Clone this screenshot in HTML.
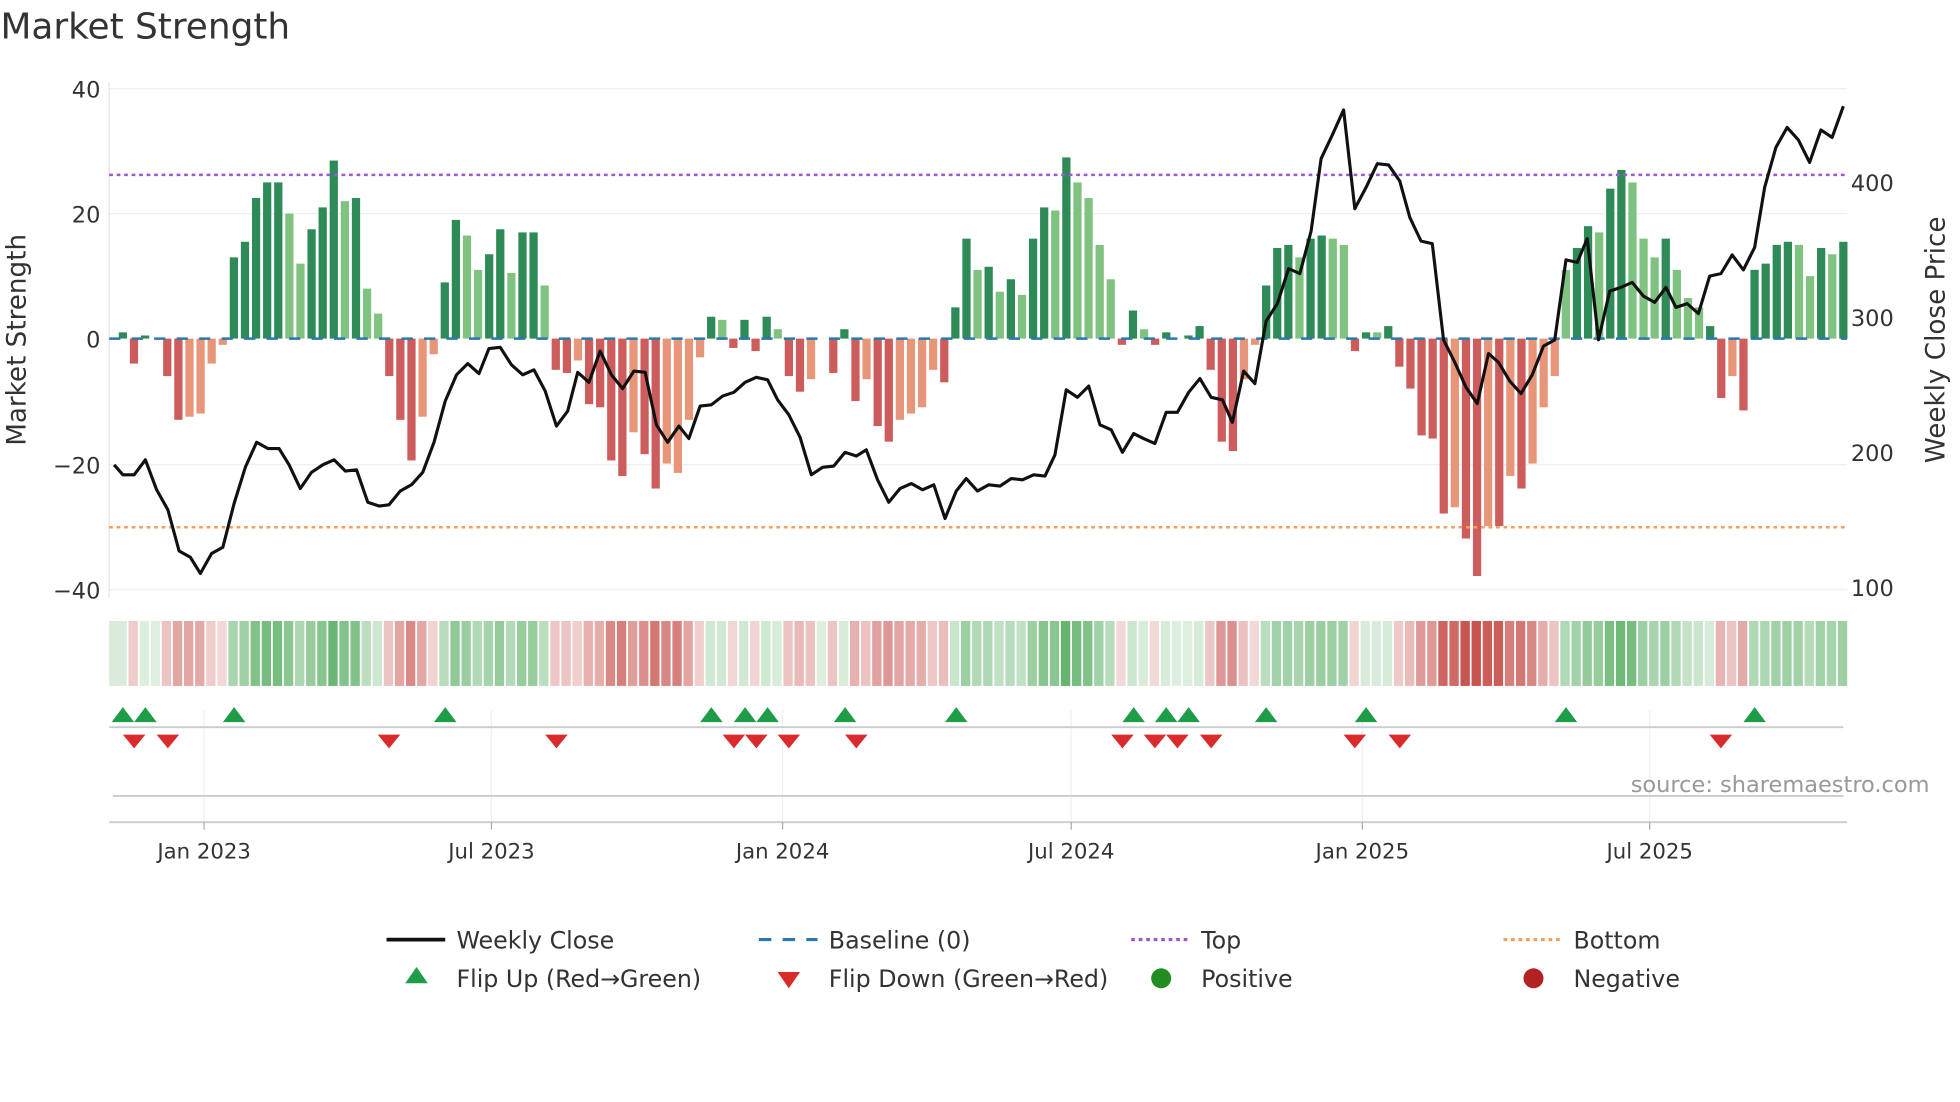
<!DOCTYPE html>
<html><head><meta charset="utf-8"><style>
html,body{margin:0;padding:0;background:#fff;width:1960px;height:1102px;overflow:hidden}
svg{display:block}
text{font-family:"DejaVu Sans","Liberation Sans",sans-serif;fill:#333}
</style></head><body>
<svg id="s" width="1960" height="1102" viewBox="0 0 1568 882" xmlns="http://www.w3.org/2000/svg">
<rect width="1568" height="882" fill="#fff"/>
<text x="0" y="31" font-size="28.7">Market Strength</text>
<g stroke="#eceff2" stroke-width="1">
<line x1="87" y1="71" x2="1478" y2="71"/><line x1="87" y1="171" x2="1478" y2="171"/>
<line x1="87" y1="372" x2="1478" y2="372"/><line x1="87" y1="472" x2="1478" y2="472"/>
</g>
<line x1="87" y1="66" x2="87" y2="478" stroke="#e6e6e6"/>
<g font-size="18" text-anchor="end">
<text x="80" y="78">40</text><text x="80" y="178">20</text><text x="80" y="278">0</text>
<text x="80" y="379">−20</text><text x="80" y="479">−40</text>
</g>
<g font-size="18">
<text x="1481" y="153">400</text><text x="1481" y="261">300</text>
<text x="1481" y="369">200</text><text x="1481" y="477">100</text>
</g>
<text transform="translate(20,272) rotate(-90)" font-size="21" text-anchor="middle">Market Strength</text>
<text transform="translate(1556,272) rotate(-90)" font-size="21" text-anchor="middle">Weekly Close Price</text>
<g id="bars"></g>
<line x1="87" y1="140" x2="1478" y2="140" stroke="#9b59d6" stroke-width="2" stroke-dasharray="3,3"/>
<line x1="87" y1="422" x2="1478" y2="422" stroke="#f0a060" stroke-width="2" stroke-dasharray="3,3"/>
<line x1="87" y1="271" x2="1478" y2="271" stroke="#2b77b0" stroke-width="2" stroke-dasharray="9,9"/>
<polyline id="price" fill="none" stroke="#111" stroke-width="2.5" stroke-linejoin="round"/>
<g id="heat"></g>
<g stroke="#eef0f2"><line x1="163" y1="568" x2="163" y2="658"/><line x1="393" y1="568" x2="393" y2="658"/><line x1="626" y1="568" x2="626" y2="658"/><line x1="857" y1="568" x2="857" y2="658"/><line x1="1090" y1="568" x2="1090" y2="658"/><line x1="1320" y1="568" x2="1320" y2="658"/></g>
<line x1="87" y1="582" x2="1475" y2="582" stroke="#ccc" stroke-width="1.5"/>
<line x1="90" y1="637" x2="1475" y2="637" stroke="#ccc" stroke-width="1.5"/>
<line x1="87" y1="658" x2="1478" y2="658" stroke="#ccc" stroke-width="1.5"/>
<g stroke="#aaa"><line x1="163" y1="658" x2="163" y2="664"/><line x1="393" y1="658" x2="393" y2="664"/><line x1="626" y1="658" x2="626" y2="664"/><line x1="857" y1="658" x2="857" y2="664"/><line x1="1090" y1="658" x2="1090" y2="664"/><line x1="1320" y1="658" x2="1320" y2="664"/></g>
<g id="flips"></g>
<text x="1544" y="634" font-size="18" text-anchor="end" style="fill:#999">source: sharemaestro.com</text>
<g font-size="17" text-anchor="middle">
<text x="163" y="687">Jan 2023</text><text x="393" y="687">Jul 2023</text><text x="626" y="687">Jan 2024</text>
<text x="857" y="687">Jul 2024</text><text x="1090" y="687">Jan 2025</text><text x="1320" y="687">Jul 2025</text>
</g>
<g font-size="19">
<line x1="309" y1="752" x2="356" y2="752" stroke="#111" stroke-width="3"/><text x="365" y="759">Weekly Close</text>
<line x1="607" y1="752" x2="654" y2="752" stroke="#2b77b0" stroke-width="2.5" stroke-dasharray="10,9"/><text x="663" y="759">Baseline (0)</text>
<line x1="905" y1="752" x2="952" y2="752" stroke="#9b59d6" stroke-width="2.5" stroke-dasharray="3,3"/><text x="961" y="759">Top</text>
<line x1="1203" y1="752" x2="1250" y2="752" stroke="#f0a060" stroke-width="2.5" stroke-dasharray="3,3"/><text x="1259" y="759">Bottom</text>
<polygon points="333,774 342,787 324,787" fill="#1e9c48"/><text x="365" y="790">Flip Up (Red→Green)</text>
<polygon points="622,778 640,778 631,791" fill="#d92b2b"/><text x="663" y="790">Flip Down (Green→Red)</text>
<circle cx="929" cy="783" r="8" fill="#238c23"/><text x="961" y="790">Positive</text>
<circle cx="1227" cy="783" r="8" fill="#b22222"/><text x="1259" y="790">Negative</text>
</g>
</svg>
<script>
var V=[[1,1],[-4,1],[0.5,1],[0,1],[-6,1],[-13,1],[-12.5,0],[-12,0],[-4,0],[-1,0],[13,1],[15.5,1],[22.5,1],[25,1],[25,1],[20,0],[12,0],[17.5,1],[21,1],[28.5,1],[22,0],[22.5,1],[8,0],[4,0],[-6,1],[-13,1],[-19.5,1],[-12.5,0],[-2.5,0],[9,1],[19,1],[16.5,0],[11,0],[13.5,1],[17.5,1],[10.5,0],[17,1],[17,1],[8.5,0],[-5,1],[-5.5,1],[-3.5,0],[-10.5,1],[-11,1],[-19.5,1],[-22,1],[-15,0],[-18.5,1],[-24,1],[-20,0],[-21.5,0],[-13,0],[-3,0],[3.5,1],[3,0],[-1.5,1],[3,1],[-2,1],[3.5,1],[1.5,0],[-6,1],[-8.5,1],[-6.5,0],[0,0],[-5.5,1],[1.5,1],[-10,1],[-6.5,0],[-14,1],[-16.5,1],[-13,0],[-12,0],[-11,0],[-5,0],[-7,1],[5,1],[16,1],[11,0],[11.5,1],[7.5,0],[9.5,1],[7,0],[16,1],[21,1],[20.5,0],[29,1],[25,0],[22.5,0],[15,0],[9.5,0],[-1,1],[4.5,1],[1.5,0],[-1,1],[1,1],[0,0],[0.5,1],[2,1],[-5,1],[-16.5,1],[-18,1],[-6.5,0],[-1,0],[8.5,1],[14.5,1],[15,1],[13,0],[16,1],[16.5,1],[16,0],[15,0],[-2,1],[1,1],[1,0],[2,1],[-4.5,1],[-8,1],[-15.5,1],[-16,1],[-28,1],[-27,0],[-32,1],[-38,1],[-30,0],[-30,1],[-22,0],[-24,1],[-20,0],[-11,0],[-6,0],[11,0],[14.5,1],[18,1],[17,0],[24,1],[27,1],[25,0],[16,0],[13,0],[16,1],[11,0],[6.5,0],[5,0],[2,1],[-9.5,1],[-6,0],[-11.5,1],[11,1],[12,1],[15,1],[15.5,1],[15,0],[10,0],[14.5,1],[13.5,0],[15.5,1]];
var NS="http://www.w3.org/2000/svg";
function el(p,t,a){var e=document.createElementNS(NS,t);for(var k in a)e.setAttribute(k,a[k]);p.appendChild(e);return e;}
var bars=document.getElementById('bars'),heat=document.getElementById('heat');
var dx=(1475-98)/155;
V.forEach(function(d,i){
 var x=98+dx*i,v=d[0],h=Math.abs(v)*5;
 var c=v>=0?(d[1]?'#2e8b57':'#80c280'):(d[1]?'#cd5c5c':'#e8967a');
 if(h>0.3)el(bars,'rect',{x:x-3.3,y:v>=0?271-h:271,width:6.6,height:h,fill:c});
 var a=Math.min(1,0.2+Math.abs(v)/40*1.0);
 var hc=v>=0?'rgba(90,175,100,'+a.toFixed(2)+')':'rgba(200,85,80,'+a.toFixed(2)+')';
 var x0=i==0?87:x-4.4;
 el(heat,'rect',{x:x0,y:497,width:(x-4.4+dx-1.4)-x0,height:52,fill:hc});
});
var P="91,372 98,380 107,380 116,368 125,392 134,408 143,441 152,446 160,459 169,443 178,438 187,403 196,374 205,354 214,359 223,359 231,372 240,391 249,378 258,372 267,368 276,377 285,376 294,402 303,405 311,404 320,393 329,388 338,378 347,354 356,321 365,300 374,291 383,299 391,279 400,278 409,292 418,300 427,296 436,313 445,341 454,329 462,298 471,306 480,281 489,300 498,311 507,297 516,298 525,340 534,354 543,341 551,351 560,325 569,324 578,317 587,314 596,306 605,302 614,304 622,320 631,332 640,350 649,380 658,374 667,373 676,362 685,365 693,360 702,384 711,402 720,391 729,387 738,392 747,388 756,415 765,393 773,383 782,393 791,388 800,389 809,383 818,384 827,380 836,381 844,364 853,312 862,318 871,309 880,340 889,344 898,362 907,347 915,351 924,355 933,330 942,330 951,314 960,303 969,318 978,320 986,338 995,297 1004,307 1013,257 1022,243 1031,215 1040,219 1049,185 1057,127 1066,108 1075,88 1084,167 1093,150 1102,131 1111,132 1120,145 1128,174 1137,193 1146,195 1155,272 1164,290 1173,310 1182,323 1191,283 1199,290 1208,305 1217,315 1226,300 1235,277 1244,272 1253,208 1262,210 1270,191 1279,272 1288,233 1297,230 1306,226 1315,237 1324,242 1333,230 1341,246 1350,243 1359,251 1368,221 1377,219 1386,204 1395,216 1404,198 1412,150 1421,118 1430,102 1439,112 1448,130 1457,104 1466,110 1475,85";
document.getElementById('price').setAttribute('points',P);
var fl=document.getElementById('flips');
[98,116,187,356,569,596,614,676,765,907,933,951,1013,1093,1253,1404].forEach(function(x){el(fl,'polygon',{points:(x)+',566 '+(x+9)+',578 '+(x-9)+',578',fill:'#1e9c48'});});
[107,134,311,445,587,605,631,685,898,924,942,969,1084,1120,1377].forEach(function(x){el(fl,'polygon',{points:(x-9)+',588 '+(x+9)+',588 '+x+',599',fill:'#d92b2b'});});
</script>
</body></html>
